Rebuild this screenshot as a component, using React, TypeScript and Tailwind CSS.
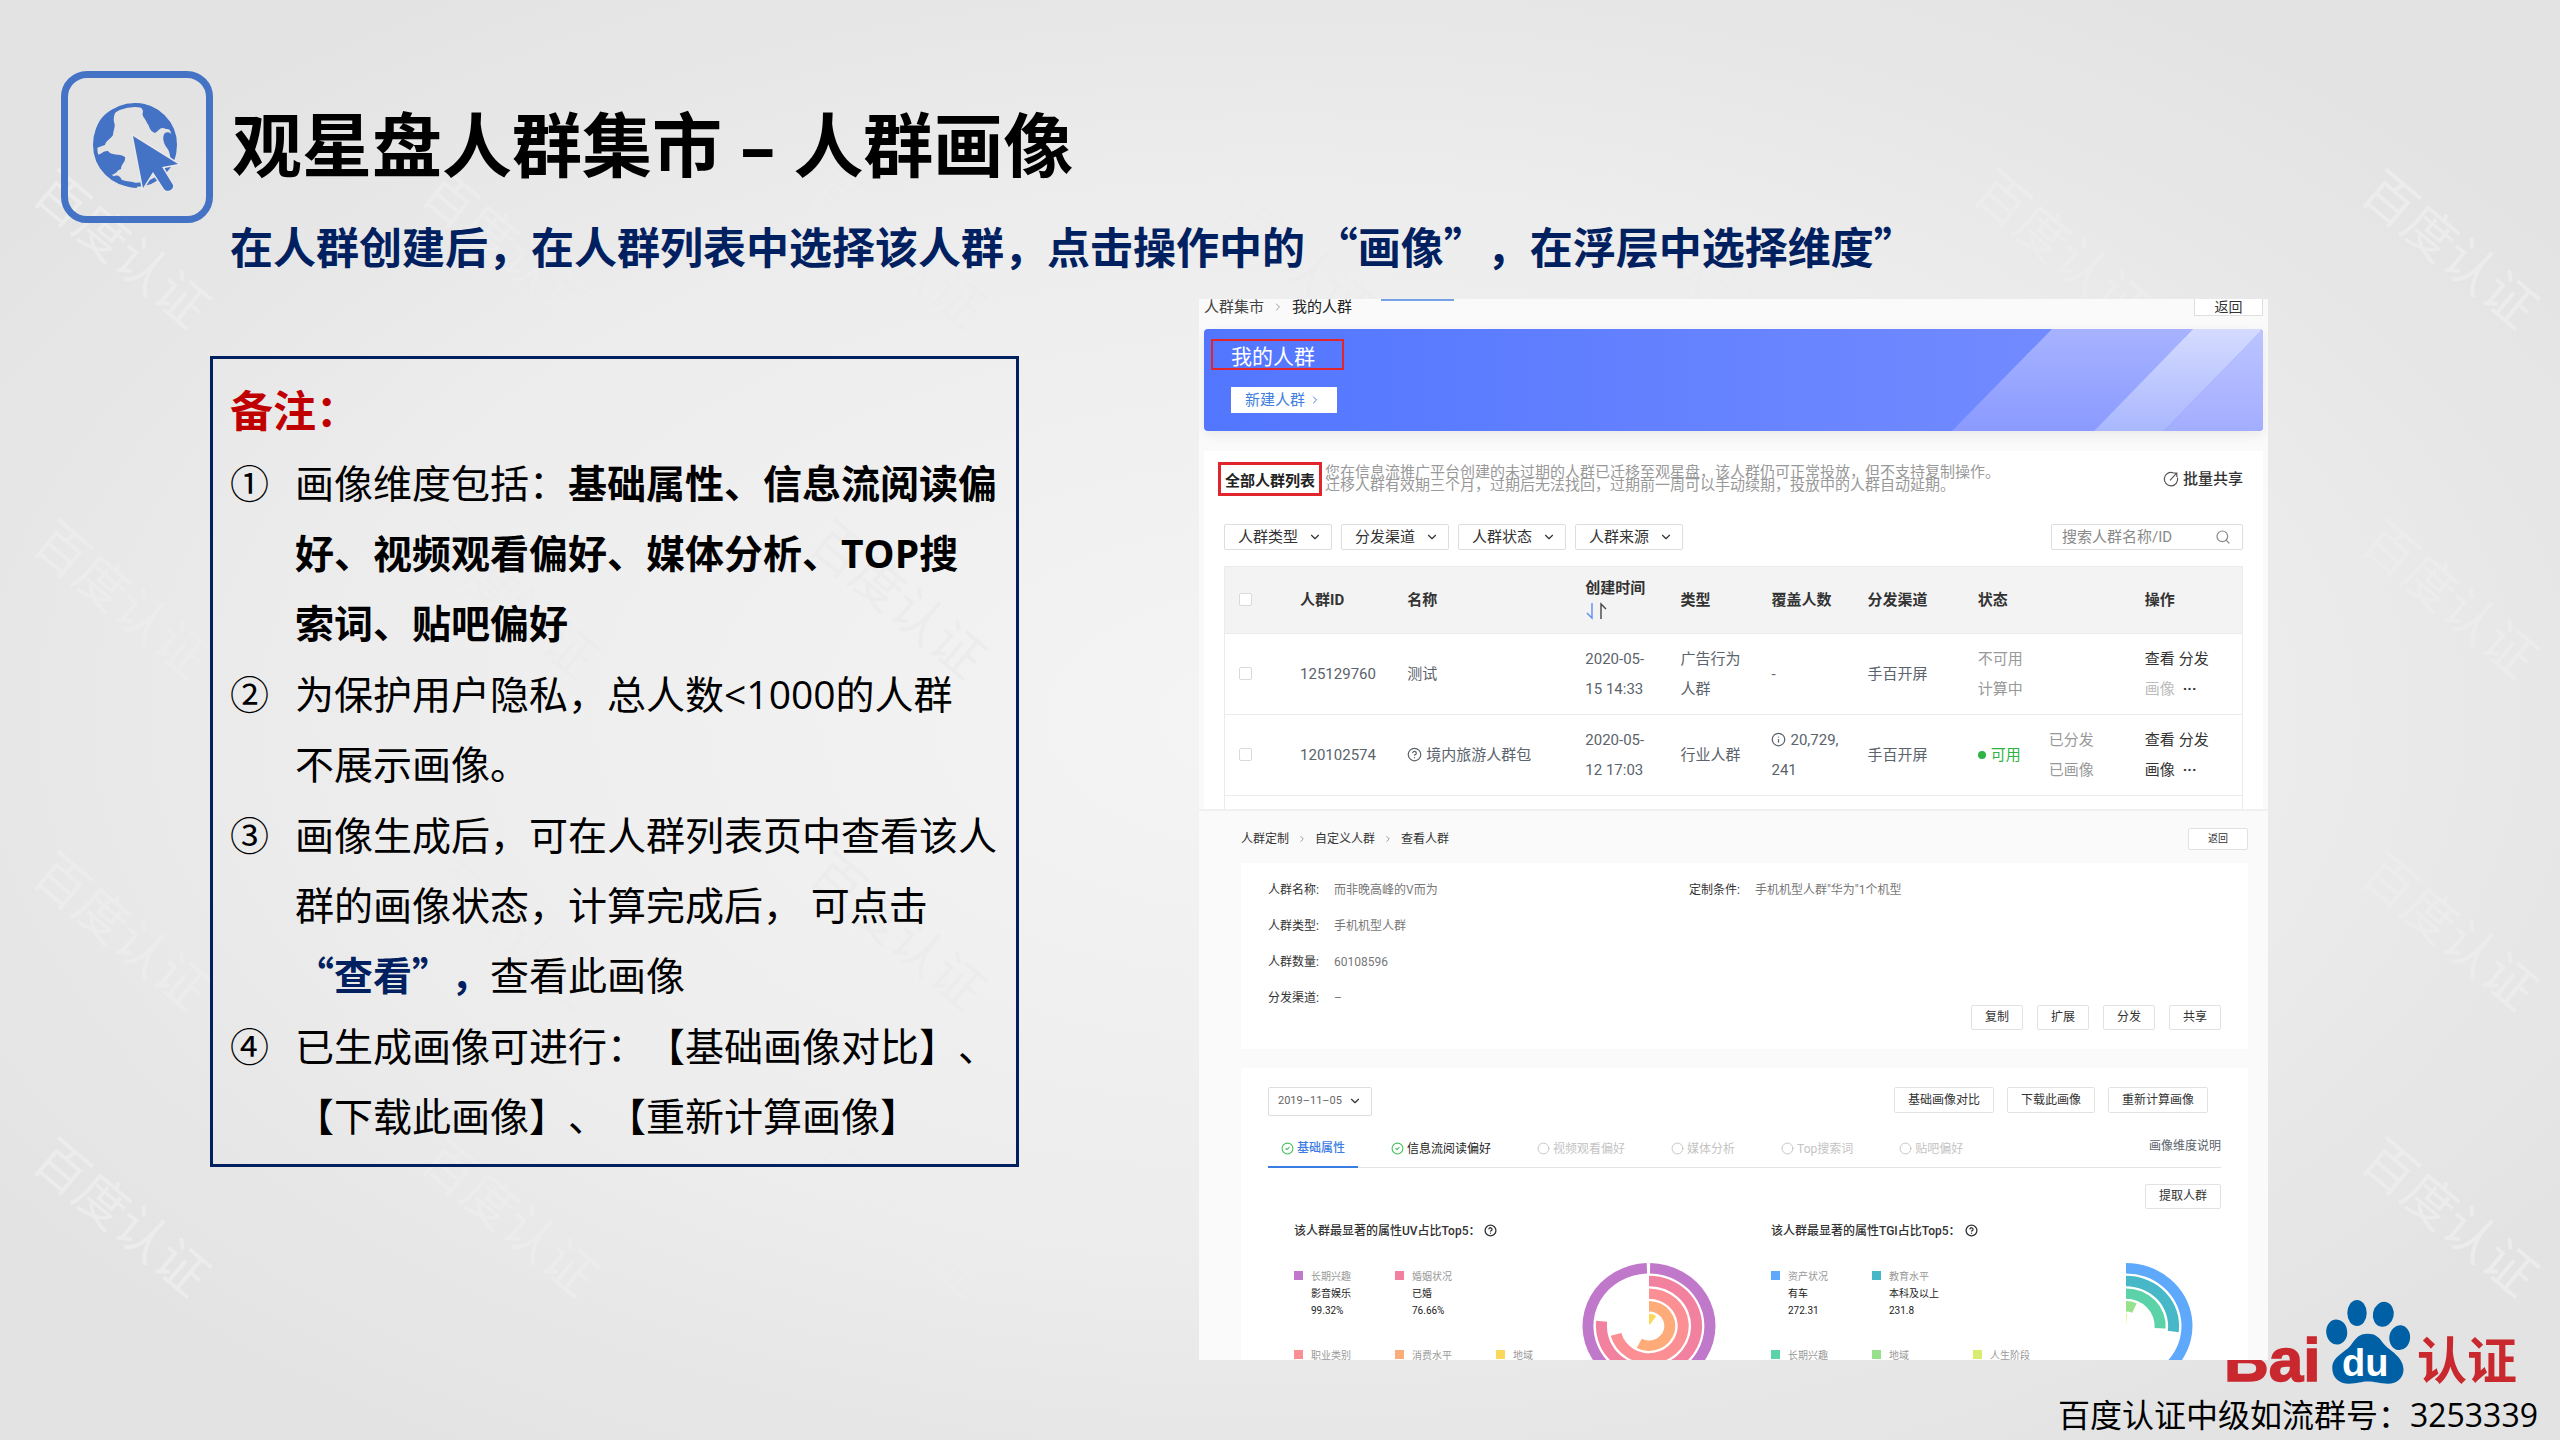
import type { ReactNode } from "react";
import {
  ChevronDown,
  ChevronRight,
  Circle,
  CircleCheck,
  HelpCircle,
  Info,
  Search,
} from "lucide-react";

const FILTERS = ["人群类型", "分发渠道", "人群状态", "人群来源"];

const TABS = [
  { label: "基础属性", state: "active" },
  { label: "信息流阅读偏好", state: "ready" },
  { label: "视频观看偏好", state: "pending" },
  { label: "媒体分析", state: "pending" },
  { label: "Top搜索词", state: "pending" },
  { label: "贴吧偏好", state: "pending" },
];

type LegendItem = { color: string; name: string; value?: string; rate?: string };
type Ring = { color: string; from?: number; to: number };

const UV_LEGEND: LegendItem[] = [
  { color: "#c078cb", name: "长期兴趣", value: "影音娱乐", rate: "99.32%" },
  { color: "#f2819f", name: "婚姻状况", value: "已婚", rate: "76.66%" },
  { color: "", name: "" },
  { color: "#fb8f94", name: "职业类别" },
  { color: "#fdab79", name: "消费水平" },
  { color: "#fbd75c", name: "地域" },
];

const TGI_LEGEND: LegendItem[] = [
  { color: "#5ea9fb", name: "资产状况", value: "有车", rate: "272.31" },
  { color: "#47b8c8", name: "教育水平", value: "本科及以上", rate: "231.8" },
  { color: "", name: "" },
  { color: "#5bd2a8", name: "长期兴趣" },
  { color: "#97e08c", name: "地域" },
  { color: "#d8ec6f", name: "人生阶段" },
];

const UV_RINGS: Ring[] = [
  { color: "#c078cb", from: 1, to: 358 },
  { color: "#f2819f", to: 276 },
  { color: "#fb8f94", to: 255 },
  { color: "#fdab79", to: 208 },
  { color: "#fbd75c", to: 34 },
];

const TGI_RINGS: Ring[] = [
  { color: "#5ea9fb", to: 165 },
  { color: "#47b8c8", to: 97 },
  { color: "#5bd2a8", to: 94 },
  { color: "#97e08c", to: 24 },
  { color: "#e3f08e", to: 5 },
];

function ringPath(outer: number, inner: number, from: number, to: number) {
  const point = (r: number, deg: number) => {
    const a = ((deg - 90) * Math.PI) / 180;
    return `${(r * Math.cos(a)).toFixed(2)} ${(r * Math.sin(a)).toFixed(2)}`;
  };
  const large = to - from > 180 ? 1 : 0;
  return `M${point(outer, from)} A${outer} ${outer} 0 ${large} 1 ${point(outer, to)} L${point(inner, to)} A${inner} ${inner} 0 ${large} 0 ${point(inner, from)} Z`;
}

function Latin({ children }: { children: ReactNode }) {
  return <span className="font-['Open_Sans',sans-serif] leading-none">{children}</span>;
}

function Watermark() {
  return (
    <div
      aria-hidden
      className="pointer-events-none absolute inset-0 overflow-hidden select-none"
    >
      <div className="absolute top-[72px] -right-[86px] -left-[70px] grid grid-cols-7 grid-rows-[350px_350px_314px_258px] place-items-center">
        {Array.from({ length: 28 }, (_, i) => (
          <span key={i} className="rotate-40 text-[52px] whitespace-nowrap text-[#ececec]">
            百度认证
          </span>
        ))}
      </div>
    </div>
  );
}

function GlobeIcon() {
  return (
    <svg viewBox="0 0 88 90" className="h-[90px] w-[88px]" aria-hidden>
      <circle cx="42" cy="43" r="40" fill="none" stroke="#4472c4" strokeWidth="4" />
      <g fill="#4472c4">
        <path d="M26 5 C22 10 20 14 21 20 C23 24 20 29 20 33 C18 37 13 38 12 43 C8 44 4 46 2 47 C-1 26 8 10 26 5Z" />
        <path d="M40 1 C45 4 50 5 50 10 C48 14 53 17 54 21 C57 24 56 29 62 31 C66 29 67 24 73 27 C77 27 78 29 79 32 C76 14 60 1 40 1Z" />
        <path d="M72 31 C78 28 83 36 83 47 C83 53 82 57 80 60 C76 56 78 51 74 46 C70 41 69 34 72 31Z" />
        <path d="M2 52 C8 54 10 48 15 49 C18 54 26 51 32 55 C33 60 28 62 28 67 C24 68 23 73 17 73 C9 68 4 61 2 52Z" />
        <path d="M20 75 C24 72 27 74 29 78 C34 80 39 79 43 81 L44 86 C34 86 26 82 20 75Z" />
      </g>
      <path
        d="M40 34 L85 62 L69 65 L80 83 C81 88 74 91 71 87 L60 70 L50 86 Z"
        fill="#4472c4"
        stroke="#e9e9e9"
        strokeWidth="3"
        paintOrder="stroke"
      />
    </svg>
  );
}

function ShareIcon() {
  return (
    <svg viewBox="0 0 16 16" className="size-4" fill="none" stroke="#555" strokeWidth="1.2" aria-hidden>
      <path d="M10 1.7 A6.7 6.7 0 1 0 14.5 6.5" />
      <path d="M7 9.3 L13.6 2.2 M9.8 2 H13.8 V6" />
    </svg>
  );
}

function SelectBox({ label, className }: { label: string; className: string }) {
  return (
    <div className="relative">
      <select
        aria-label={label}
        className={`block appearance-none rounded-[2px] border border-[#dedede] bg-white ${className}`}
      >
        <option>{label}</option>
      </select>
      <ChevronDown
        className="pointer-events-none absolute inset-y-0 right-2.5 my-auto size-3.5 text-[#333]"
        strokeWidth={2}
      />
    </div>
  );
}

function SmallButton({ children, className = "" }: { children: ReactNode; className?: string }) {
  return (
    <button
      type="button"
      className={`rounded-[2px] border border-[#e2e2e2] bg-white text-center leading-none whitespace-nowrap ${className}`}
    >
      {children}
    </button>
  );
}

function Remarks() {
  return (
    <section className="mt-[57px] border-[3px] border-[#002060] pt-4 pb-[15px] pl-[17px]">
      <h3 className="text-[43px] leading-[66px] font-bold text-[#c00000]">备注：</h3>
      <ol className="mt-[5px] flex flex-col gap-px text-[39px] leading-[70px] whitespace-nowrap text-black">
        <li className="flex gap-[26px]">
          <span>①</span>
          <p>
            画像维度包括：<b>基础属性、信息流阅读偏</b>
            <br />
            <b>
              好、视频观看偏好、媒体分析、<Latin>TOP</Latin>搜
            </b>
            <br />
            <b>索词、贴吧偏好</b>
          </p>
        </li>
        <li className="flex gap-[26px]">
          <span>②</span>
          <p>
            为保护用户隐私，总人数<Latin>&lt;1000</Latin>的人群
            <br />
            不展示画像。
          </p>
        </li>
        <li className="flex gap-[26px]">
          <span>③</span>
          <p>
            画像生成后，可在人群列表页中查看该人
            <br />
            群的画像状态，计算完成后， 可点击
            <br />
            <b className="text-[#002060]">“查看”，</b>查看此画像
          </p>
        </li>
        <li className="flex gap-[26px]">
          <span>④</span>
          <p>
            已生成画像可进行：【基础画像对比】、
            <br />
            【下载此画像】、【重新计算画像】
          </p>
        </li>
      </ol>
    </section>
  );
}

function Banner() {
  return (
    <div className="relative mt-[13px] overflow-hidden rounded-[4px] bg-linear-to-r from-[#5276ff] to-[#7a8fff] pt-2.5 pb-[18px] shadow-[0_4px_12px_rgba(0,0,0,0.07)]">
      <svg
        viewBox="749 0 311 102"
        preserveAspectRatio="none"
        className="absolute top-0 right-0 h-full w-[311px]"
        aria-hidden
      >
        <defs>
          <linearGradient id="stripeA" x1="0" y1="0" x2="0" y2="1">
            <stop offset="0" stopColor="#a7b3ff" />
            <stop offset="1" stopColor="#8a9aff" />
          </linearGradient>
          <linearGradient id="stripeB" x1="0" y1="0" x2="0" y2="1">
            <stop offset="0" stopColor="#d5dbff" />
            <stop offset="1" stopColor="#a9b7fe" />
          </linearGradient>
          <linearGradient id="stripeC" x1="0" y1="0" x2="0" y2="1">
            <stop offset="0" stopColor="#bcc5ff" />
            <stop offset="1" stopColor="#a3adff" />
          </linearGradient>
        </defs>
        <path d="M849 0 H990 L891 102 H749Z" fill="url(#stripeA)" />
        <path d="M990 0 H1060 L961 102 H891Z" fill="url(#stripeB)" />
        <path d="M1060 0 V102 H961Z" fill="url(#stripeC)" />
      </svg>
      <h4 className="ml-[7px] h-[31px] w-[133px] border-2 border-[#e0262c] pl-[18px] text-[21px] leading-[33px] text-white">
        我的人群
      </h4>
      <button
        type="button"
        className="mt-[17px] ml-[27px] flex h-[26px] w-[106px] items-center gap-1 bg-white pl-3.5 text-[15px] leading-none whitespace-nowrap text-[#3f7fe0]"
      >
        新建人群
        <ChevronRight className="size-3" strokeWidth={2} />
      </button>
    </div>
  );
}

function RowActions({ muted = false }: { muted?: boolean }) {
  return (
    <div className="text-[#333]">
      <div className="flex gap-1">
        <button type="button">查看</button>
        <button type="button">分发</button>
      </div>
      <div className="flex gap-2">
        <button type="button" className={muted ? "text-[#bbb]" : ""}>
          画像
        </button>
        <button type="button" className="font-bold">
          ···
        </button>
      </div>
    </div>
  );
}

function CheckBox({ label }: { label: string }) {
  return (
    <input
      type="checkbox"
      aria-label={label}
      className="block size-[13px] appearance-none rounded-[2px] border border-[#d9d9d9] bg-white"
    />
  );
}

function CrowdTable() {
  return (
    <div className="mt-4 border-x border-t border-[#ebebeb] pb-[13px]">
      <table className="w-full table-fixed text-left text-[15px] leading-[30px] text-[#5b636c]">
        <colgroup>
          <col className="w-[75px]" />
          <col className="w-[107px]" />
          <col className="w-[178px]" />
          <col className="w-[95px]" />
          <col className="w-[91px]" />
          <col className="w-[96px]" />
          <col className="w-[110px]" />
          <col className="w-[71px]" />
          <col className="w-[96px]" />
          <col className="w-[97px]" />
        </colgroup>
        <thead className="bg-[#f3f3f3] text-[#333]">
          <tr className="h-[66px] border-b border-[#ebebeb]">
            <th className="pl-3.5">
              <CheckBox label="全选" />
            </th>
            <th>人群ID</th>
            <th>名称</th>
            <th className="leading-[27px]">
              创建时间
              <svg viewBox="0 0 24 18" className="mb-1 h-[18px] w-6" fill="none" strokeWidth="1.4" aria-hidden>
                <path d="M7 1 V16 L2 11" stroke="#5b8df5" />
                <path d="M16 17 V2 L21 7" stroke="#444" />
              </svg>
            </th>
            <th>类型</th>
            <th>覆盖人数</th>
            <th>分发渠道</th>
            <th colSpan={2}>状态</th>
            <th>操作</th>
          </tr>
        </thead>
        <tbody>
          <tr className="h-[81px] border-b border-[#ebebeb]">
            <td className="pl-3.5">
              <CheckBox label="125129760" />
            </td>
            <td>125129760</td>
            <td>测试</td>
            <td>
              2020-05-
              <br />
              15 14:33
            </td>
            <td>
              广告行为
              <br />
              人群
            </td>
            <td>-</td>
            <td>手百开屏</td>
            <td className="text-[#999]">
              不可用
              <br />
              计算中
            </td>
            <td />
            <td>
              <RowActions muted />
            </td>
          </tr>
          <tr className="h-[81px] border-b border-[#ebebeb]">
            <td className="pl-3.5">
              <CheckBox label="120102574" />
            </td>
            <td>120102574</td>
            <td>
              <span className="flex items-center gap-1">
                <HelpCircle className="size-[15px]" strokeWidth={2} />
                境内旅游人群包
              </span>
            </td>
            <td>
              2020-05-
              <br />
              12 17:03
            </td>
            <td>行业人群</td>
            <td>
              <span className="flex items-center gap-1">
                <Info className="size-[15px]" strokeWidth={2} />
                20,729,
              </span>
              241
            </td>
            <td>手百开屏</td>
            <td className="text-[#2fb344]">
              <span className="flex items-center gap-[5px]">
                <i className="size-2 rounded-full bg-[#2fb344]" />
                可用
              </span>
            </td>
            <td className="text-[#999]">
              已分发
              <br />
              已画像
            </td>
            <td>
              <RowActions />
            </td>
          </tr>
        </tbody>
      </table>
    </div>
  );
}

function CrowdListScreen() {
  return (
    <div className="relative bg-[#fafafa] px-[5px]">
      <div className="absolute top-0 left-[182px] h-0.5 w-[73px] bg-[#78a2e6]" />
      <div className="flex h-[17px] items-start justify-between">
        <nav className="flex items-center gap-2 text-[15px] leading-4 text-[#444]">
          <a href="#market">人群集市</a>
          <ChevronRight className="size-3 text-[#999]" strokeWidth={2} />
          <span className="text-[#222]">我的人群</span>
        </nav>
        <button
          type="button"
          className="h-[17px] w-[69px] overflow-hidden border border-t-0 border-[#dedede] bg-white text-[14px] leading-3 text-[#333]"
        >
          返回
        </button>
      </div>
      <Banner />
      <div className="mt-5 bg-white px-5 pt-[11px]">
        <div className="flex items-center text-[15px]">
          <h4 className="-ml-1.5 h-[34px] w-[104px] border-[3px] border-[#e0262c] pl-1 leading-8 font-bold whitespace-nowrap text-[#222]">
            全部人群列表
          </h4>
          <p className="ml-[3px] leading-[13px] whitespace-nowrap text-[#999]">
            您在信息流推广平台创建的未过期的人群已迁移至观星盘，该人群仍可正常投放，但不支持复制操作。
            <br />
            迁移人群有效期三个月，过期后无法找回，过期前一周可以手动续期，投放中的人群自动延期。
          </p>
          <button type="button" className="ml-auto flex items-center gap-1 font-medium text-[#333]">
            <ShareIcon />
            批量共享
          </button>
        </div>
        <div className="mt-7 flex gap-[9px]">
          {FILTERS.map((f) => (
            <SelectBox
              key={f}
              label={f}
              className="h-[26px] w-[108px] pl-[13px] text-[15px] leading-6 text-[#333]"
            />
          ))}
          <div className="relative ml-auto">
            <input
              type="search"
              aria-label="搜索人群名称/ID"
              placeholder="搜索人群名称/ID"
              className="block h-[26px] w-[192px] rounded-[2px] border border-[#dedede] bg-white pl-2.5 text-[15px] placeholder:text-[#8a8a8a]"
            />
            <Search
              className="pointer-events-none absolute inset-y-0 right-3 my-auto size-4 text-[#888]"
              strokeWidth={1.8}
            />
          </div>
        </div>
        <CrowdTable />
      </div>
    </div>
  );
}

function Field({ label, value }: { label: string; value: string }) {
  return (
    <div className="flex">
      <dt className="w-[66px] text-[#333]">{label}:</dt>
      <dd className="text-[#777]">{value}</dd>
    </div>
  );
}

function RingChart({ rings }: { rings: Ring[] }) {
  return (
    <svg viewBox="0 0 134 97" className="-mt-[5px] h-[97px] w-[134px] shrink-0" aria-hidden>
      <g transform="translate(67 63) scale(1 0.947)">
        {rings.map((ring, i) => {
          const outer = 66.5 - i * 13.4;
          return (
            <path
              key={ring.color}
              d={ringPath(outer, Math.max(outer - 11, 1), ring.from ?? 0, ring.to)}
              fill={ring.color}
            />
          );
        })}
      </g>
    </svg>
  );
}

function TopFive({ title, legend, rings }: { title: string; legend: LegendItem[]; rings: Ring[] }) {
  return (
    <section>
      <h5 className="flex items-center gap-1 text-[12px] leading-4 font-medium text-[#333]">
        {title}
        <HelpCircle className="size-[13px]" strokeWidth={2.4} />
      </h5>
      <div className="mt-[29px] flex items-start">
        <ul className="grid w-[288px] shrink-0 grid-cols-[101px_101px_1fr] gap-y-7 text-[10px] leading-[17px] whitespace-nowrap">
          {legend.map((item, i) => (
            <li key={i} className="flex items-start gap-2">
              {item.name && (
                <span className="mt-[3px] size-[9px] shrink-0" style={{ backgroundColor: item.color }} />
              )}
              <div className="text-[#222]">
                <p className="text-[#999]">{item.name}</p>
                <p>{item.value}</p>
                <p>{item.rate}</p>
              </div>
            </li>
          ))}
        </ul>
        <RingChart rings={rings} />
      </div>
    </section>
  );
}

function PortraitScreen() {
  return (
    <div className="border-t-2 border-[#f0f0f0] bg-[#fafafa] pt-[17px] pr-5 pl-[42px] text-[12px] text-[#333]">
      <div className="flex items-center justify-between">
        <nav className="flex items-center gap-2">
          <a href="#custom">人群定制</a>
          <ChevronRight className="size-2.5 text-[#888]" strokeWidth={2} />
          <a href="#defined">自定义人群</a>
          <ChevronRight className="size-2.5 text-[#888]" strokeWidth={2} />
          <span>查看人群</span>
        </nav>
        <SmallButton className="h-[22px] w-[60px] text-[10px]">返回</SmallButton>
      </div>

      <div className="mt-[13px] grid grid-cols-[421px_1fr_auto] bg-white px-[27px] pt-[9px] pb-[19px]">
        <dl className="pb-3.5 leading-9">
          <Field label="人群名称" value="而非晚高峰的V而为" />
          <Field label="人群类型" value="手机机型人群" />
          <Field label="人群数量" value="60108596" />
          <Field label="分发渠道" value="–" />
        </dl>
        <dl className="leading-9">
          <Field label="定制条件" value={'手机机型人群"华为"1个机型'} />
        </dl>
        <div className="flex items-end gap-3.5">
          {["复制", "扩展", "分发", "共享"].map((t) => (
            <SmallButton key={t} className="h-[25px] w-[52px]">
              {t}
            </SmallButton>
          ))}
        </div>
      </div>

      <div className="mt-[19px] bg-white px-[27px] pt-[19px]">
        <div className="flex items-start justify-between">
          <SelectBox label="2019–11–05" className="h-[29px] w-[104px] pl-[9px] text-[11px] text-[#666]" />
          <div className="mr-[13px] flex gap-[13px]">
            <SmallButton className="h-[26px] w-[100px]">基础画像对比</SmallButton>
            <SmallButton className="h-[26px] w-[88px]">下载此画像</SmallButton>
            <SmallButton className="h-[26px] w-[100px]">重新计算画像</SmallButton>
          </div>
        </div>

        <div className="mt-[15px] flex h-[37px] justify-between border-b border-[#e3e3e3]">
          <div role="tablist" className="flex gap-5">
            {TABS.map((tab) => (
              <button
                key={tab.label}
                type="button"
                role="tab"
                aria-selected={tab.state === "active"}
                className={
                  tab.state === "active"
                    ? "-mb-px flex items-center gap-[3px] border-b-2 border-[#3b7ce2] px-[13px] font-medium text-[#3b7ce2]"
                    : tab.state === "ready"
                      ? "flex items-center gap-[3px] px-[13px] text-[#222]"
                      : "flex items-center gap-[3px] px-[13px] text-[#c4c4c4]"
                }
              >
                {tab.state === "pending" ? (
                  <Circle className="size-[13px]" strokeWidth={1.8} />
                ) : (
                  <CircleCheck className="size-[13px] text-[#45c15a]" strokeWidth={2} />
                )}
                {tab.label}
              </button>
            ))}
          </div>
          <a href="#dimensions" className="leading-[30px] text-[#5b636c]">
            画像维度说明
          </a>
        </div>

        <div className="mt-4 flex justify-end">
          <SmallButton className="h-[25px] w-[76px]">提取人群</SmallButton>
        </div>

        <div className="mt-3.5 -mr-[27px] ml-[26px] grid h-[137px] grid-cols-2 overflow-hidden">
          <TopFive title="该人群最显著的属性UV占比Top5：" legend={UV_LEGEND} rings={UV_RINGS} />
          <TopFive title="该人群最显著的属性TGI占比Top5：" legend={TGI_LEGEND} rings={TGI_RINGS} />
        </div>
      </div>
    </div>
  );
}

function BaiduLogo() {
  return (
    <svg viewBox="0 0 290 86" className="h-[86px] w-[290px] overflow-visible" role="img" aria-label="Baidu 认证">
      <text
        x="-4"
        y="82"
        fill="#c8282e"
        stroke="#c8282e"
        strokeWidth="1.5"
        className="font-['Liberation_Sans',sans-serif] text-[62px] font-bold"
      >
        Bai
      </text>
      <g fill="#0060a6">
        <ellipse cx="108.7" cy="33" rx="10.5" ry="12.6" transform="rotate(-6 108.7 33)" />
        <ellipse cx="129" cy="14" rx="9.7" ry="13" />
        <ellipse cx="155.3" cy="15.3" rx="10.4" ry="12.5" transform="rotate(12 155.3 15.3)" />
        <ellipse cx="171.7" cy="38.7" rx="10.4" ry="12.4" transform="rotate(6 171.7 38.7)" />
        <path d="M139.7 34.7 C147 34.7 151 38 155 44 C160 51 175.5 57 175.5 70.5 C175.5 79 169 84.7 160 84.7 C152 84.7 147 82.6 140 82.6 C133 82.6 129 84.7 121 84.7 C111 84.7 104.3 79 104.3 69 C104.3 57 118 53 123 46 C128 39 131 34.7 139.7 34.7Z" />
      </g>
      <text x="114" y="77" fill="#fff" className="font-['Liberation_Sans',sans-serif] text-[38px] font-bold">
        du
      </text>
      <text x="189" y="80" fill="#c8282e" className="text-[50px] font-bold">
        认证
      </text>
    </svg>
  );
}

export default function App() {
  return (
    <div
      lang="zh-CN"
      className="relative min-h-screen bg-[radial-gradient(ellipse_at_center,#f4f4f4_0%,#ededed_50%,#e3e3e3_85%)] font-['Noto_Sans_CJK_SC',sans-serif] [text-spacing-trim:space-all]"
    >
      <Watermark />
      <header className="relative flex gap-[18px] pt-[71px] pl-[61px]">
        <div className="flex size-[152px] shrink-0 items-center justify-center rounded-[26px] border-[7px] border-[#4472c4]">
          <GlobeIcon />
        </div>
        <div className="-ml-px pt-5 whitespace-nowrap">
          <h1 className="ml-0.5 text-[70px] leading-[102px] font-bold text-black">
            观星盘人群集市<Latin> – </Latin>人群画像
          </h1>
          <h2 className="mt-5 text-[43px] leading-[64px] font-bold text-[#002060]">
            在人群创建后，在人群列表中选择该人群，点击操作中的 “画像”，在浮层中选择维度”
          </h2>
        </div>
      </header>

      <main className="relative z-10 mt-[22px] grid grid-cols-[minmax(0,809fr)_minmax(0,1069fr)] items-start gap-[180px] pr-[292px] pl-[210px]">
        <Remarks />
        <div className="overflow-hidden font-[Roboto,'Noto_Sans_CJK_SC',sans-serif]">
          <CrowdListScreen />
          <PortraitScreen />
        </div>
      </main>

      <footer className="relative -mt-[61px] flex flex-col items-end pr-[22px]">
        <div className="mr-5">
          <BaiduLogo />
        </div>
        <p className="mt-1 text-[32px] leading-[48px] text-black">
          百度认证中级如流群号：<Latin>3253339</Latin>
        </p>
      </footer>
    </div>
  );
}
